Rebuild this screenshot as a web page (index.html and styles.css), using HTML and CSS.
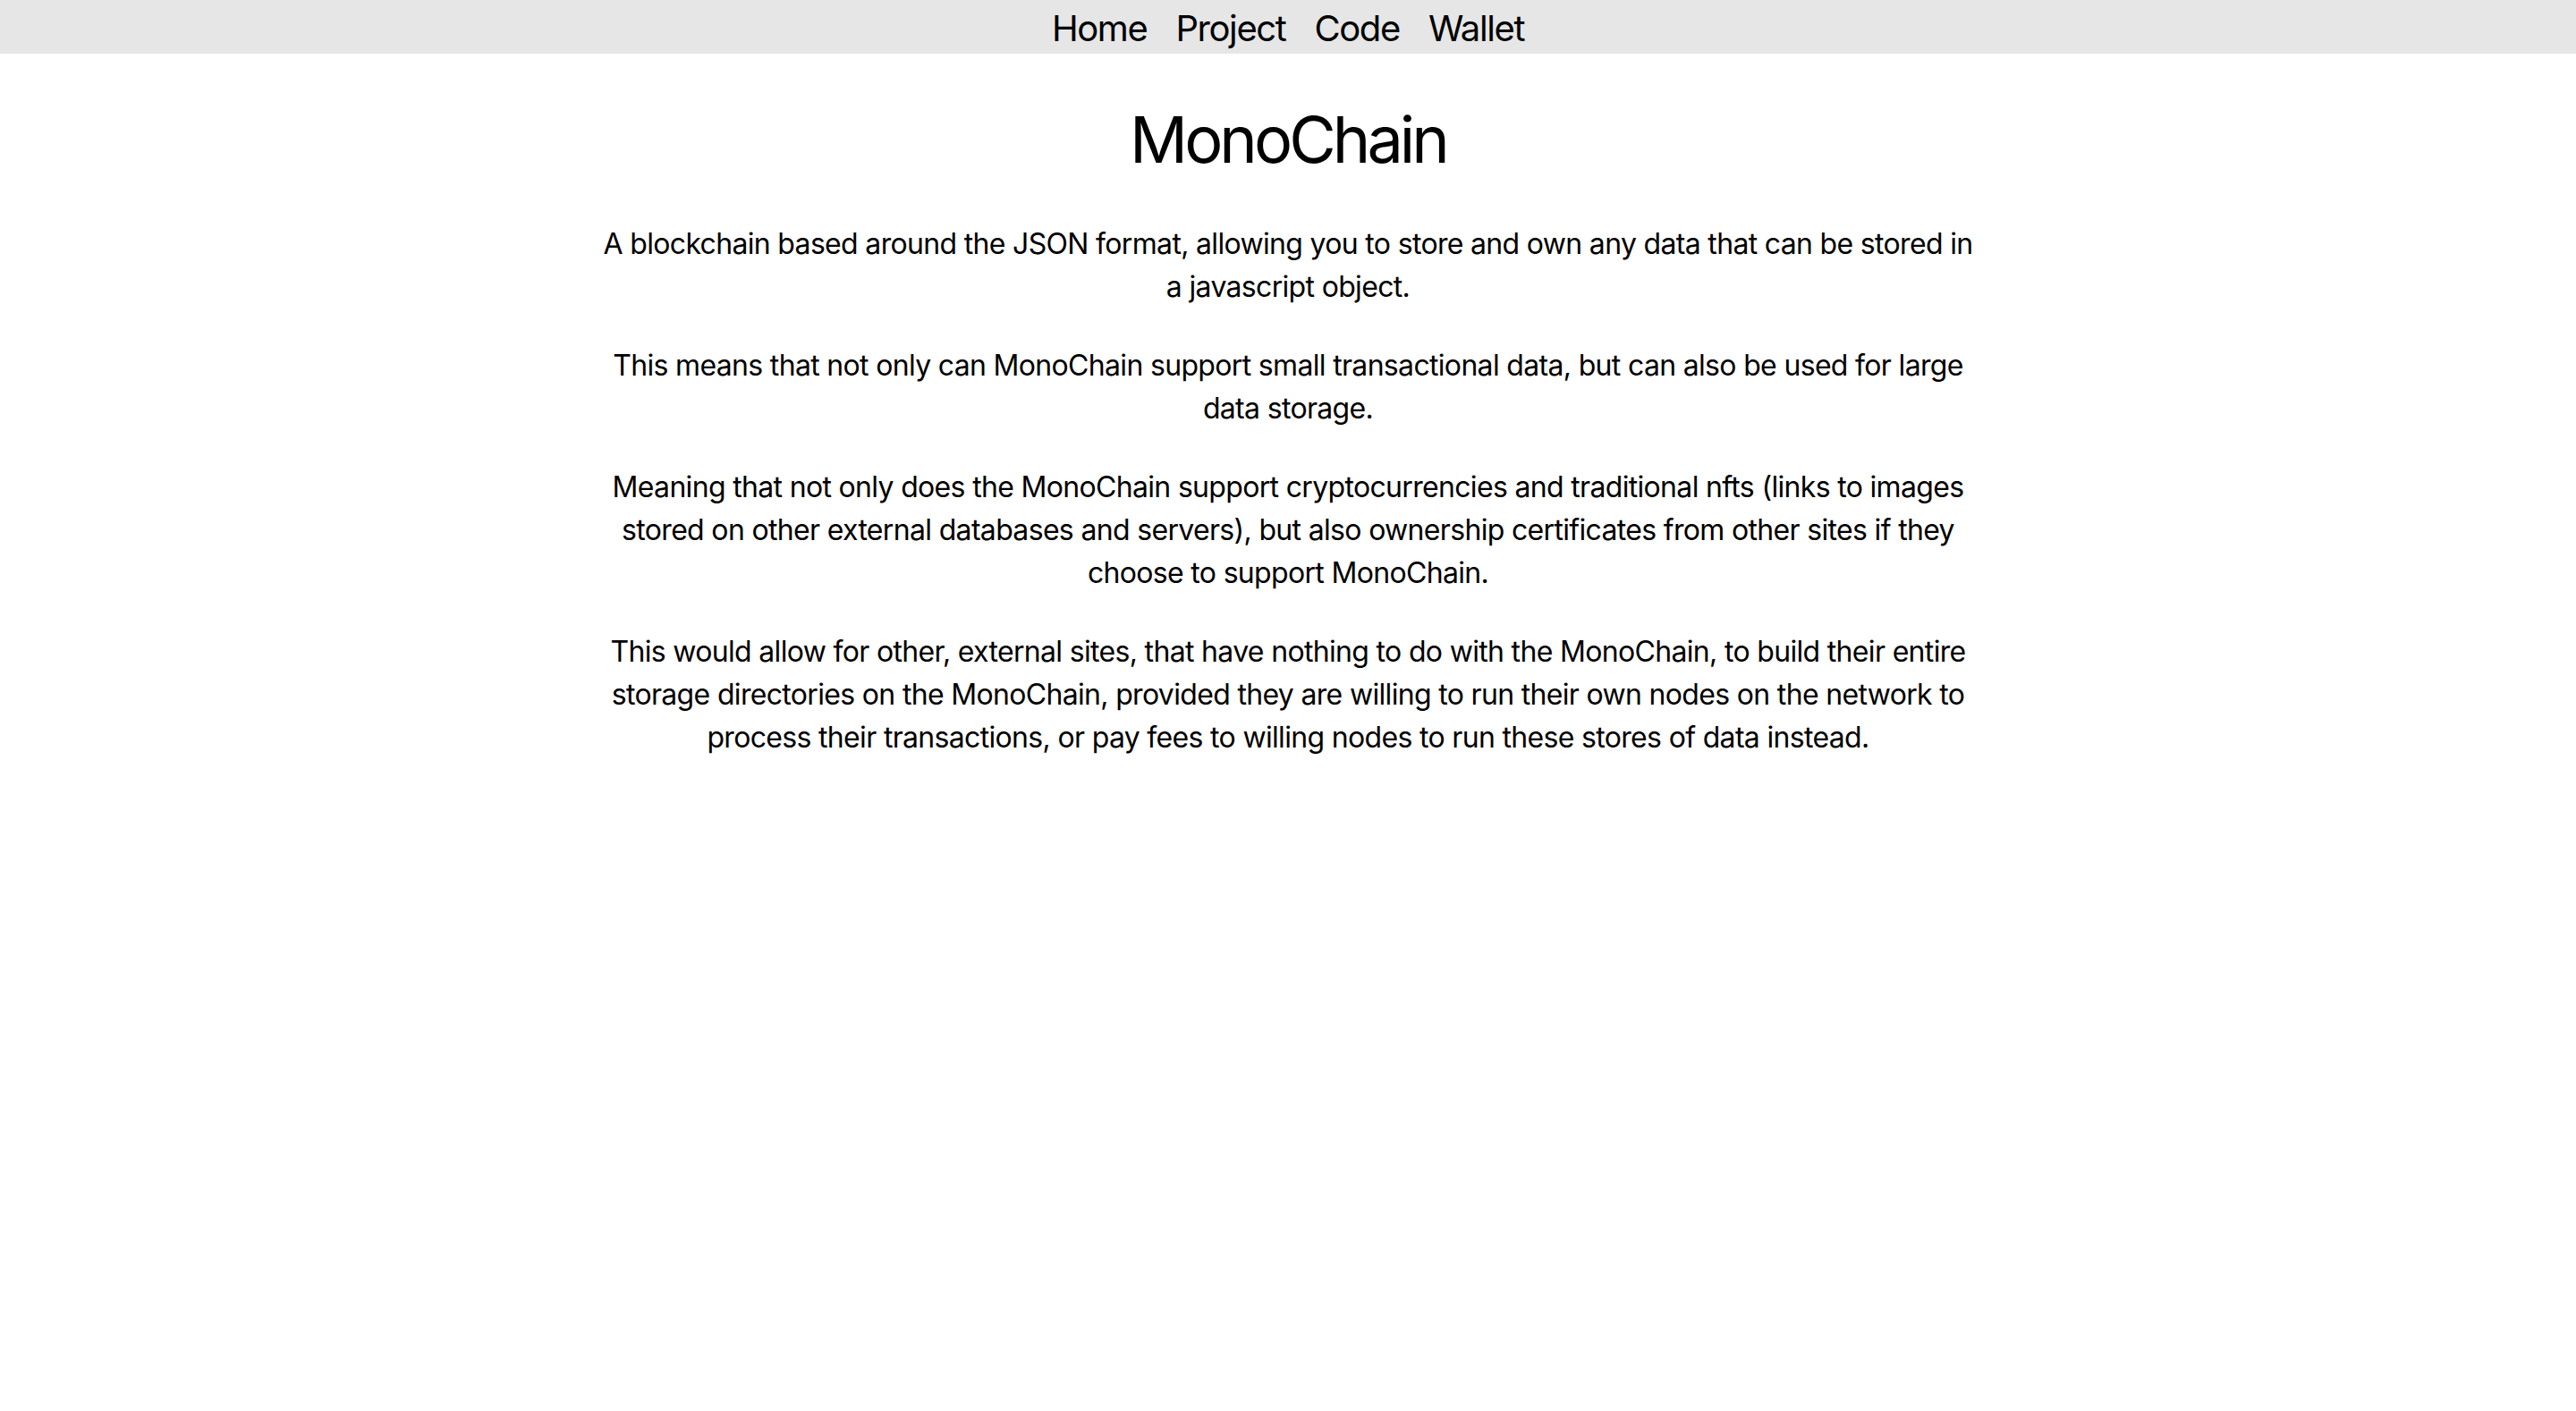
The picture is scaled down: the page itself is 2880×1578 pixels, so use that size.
FILE: index.html
```html
<!DOCTYPE html>
<html lang="en">
<head>
<meta charset="utf-8">
<title>MonoChain</title>
<link rel="stylesheet" href="styles.css">
</head>
<body>
<nav class="topnav">
  <a class="navlink" href="#">Home</a>
  <a class="navlink" href="#">Project</a>
  <a class="navlink" href="#">Code</a>
  <a class="navlink" href="#">Wallet</a>
</nav>
<main class="content">
  <h1 class="title">MonoChain</h1>
  <p class="para">A blockchain based around the JSON format, allowing you to store and own any data that can be stored in a javascript object.</p>
  <p class="para">This means that not only can MonoChain support small transactional data, but can also be used for large data storage.</p>
  <p class="para">Meaning that not only does the MonoChain support cryptocurrencies and traditional nfts (links to images stored on other external databases and servers), but also ownership certificates from other sites if they choose to support MonoChain.</p>
  <p class="para">This would allow for other, external sites, that have nothing to do with the MonoChain, to build their entire storage directories on the MonoChain, provided they are willing to run their own nodes on the network to process their transactions, or pay fees to willing nodes to run these stores of data instead.</p>
</main>
</body>
</html>
```
FILE: styles.css
```css
html, body {
  margin: 0;
  padding: 0;
  background: #ffffff;
}
body {
  font-family: Inter, "Noto Sans", "Liberation Sans", sans-serif;
  color: #000000;
}
.topnav {
  box-sizing: border-box;
  height: 60px;
  padding-top: 3px;
  background: #e6e6e6;
  display: flex;
  justify-content: center;
  align-items: center;
  gap: 32px;
}
.navlink {
  font-size: 40px;
  line-height: 48px;
  letter-spacing: -0.035em;
  color: #000000;
  text-decoration: none;
}
.content {
  width: 1540px;
  margin: 0 auto;
  padding-top: 53px;
  text-align: center;
}
.title {
  font-size: 72px;
  font-weight: 400;
  line-height: 86px;
  letter-spacing: -0.055em;
  margin: 0 0 50px;
}
.para {
  font-size: 32px;
  line-height: 48px;
  letter-spacing: -0.021em;
  margin: 0 0 40px;
}
```
